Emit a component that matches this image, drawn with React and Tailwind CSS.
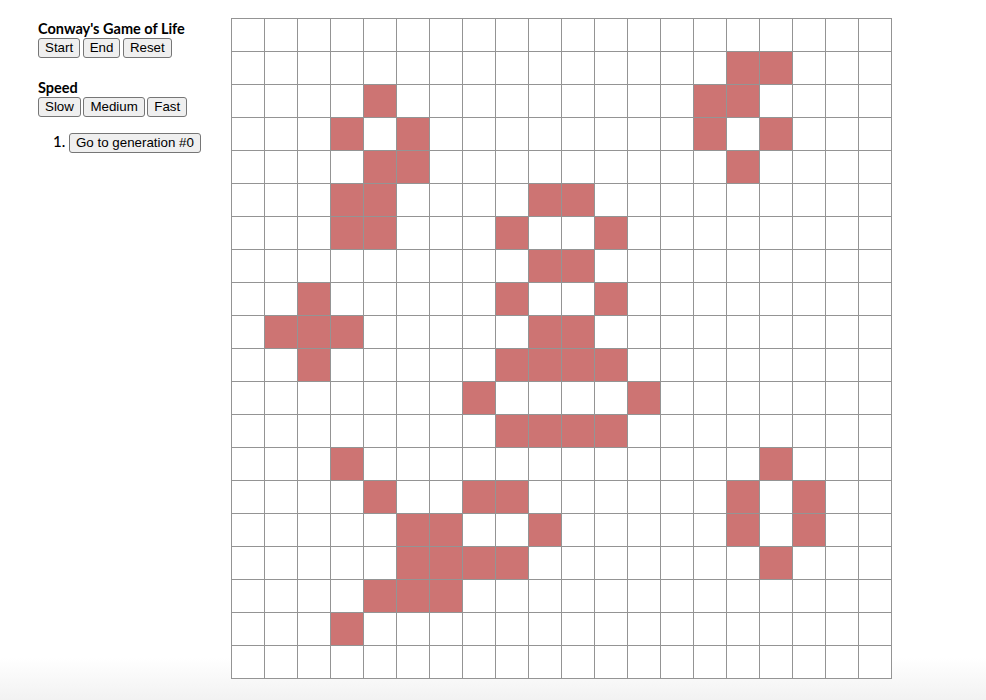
import React from "react";

const ROWS = 20;
const COLS = 20;

// live cells as "row-col"
const liveCells = new Set([
    "1-15", "1-16",
    "2-4", "2-14", "2-15",
    "3-3", "3-5", "3-14", "3-16",
    "4-4", "4-5", "4-15",
    "5-3", "5-4", "5-9", "5-10",
    "6-3", "6-4", "6-8", "6-11",
    "7-9", "7-10",
    "8-2", "8-8", "8-11",
    "9-1", "9-2", "9-3", "9-9", "9-10",
    "10-2", "10-8", "10-9", "10-10", "10-11",
    "11-7", "11-12",
    "12-8", "12-9", "12-10", "12-11",
    "13-3", "13-16",
    "14-4", "14-7", "14-8", "14-15", "14-17",
    "15-5", "15-6", "15-9", "15-15", "15-17",
    "16-5", "16-6", "16-7", "16-8", "16-16",
    "17-4", "17-5", "17-6",
    "18-3",
]);

const Button = ({ children }) => (
    <button className="bg-[#efefef] border border-[#767676] rounded-[3px] px-[6px] py-[1px] text-[13.33px] leading-[16px] font-normal text-black font-['Liberation_Sans',Arial,sans-serif]">
        {children}
    </button>
);

const Board = () => {
    const cells = [];
    for (let r = 0; r < ROWS; r++) {
        for (let c = 0; c < COLS; c++) {
            const alive = liveCells.has(`${r}-${c}`);
            cells.push(
                <div
                    key={`${r}-${c}`}
                    className={`w-[33px] h-[33px] border-r border-b border-[#949494] ${
                        alive ? "bg-[#cd7473]" : "bg-white"
                    }`}
                />
            );
        }
    }
    return (
        <div className="grid grid-cols-[repeat(20,33px)] border-l border-t border-[#949494] self-start">
            {cells}
        </div>
    );
};

export default function App() {
    return (
        <div className="min-h-[700px] bg-linear-to-b from-white from-[94%] to-[#f2f2f2] font-['Lato','Noto_Sans',sans-serif] text-black">
            <div className="flex pt-[18px]">
                <div className="w-[231px] shrink-0 pl-[38px] pt-[1px]">
                    <h3 className="text-[14.5px] font-bold leading-[19px]">
                        Conway's Game of Life
                    </h3>
                    <div className="flex gap-[2.5px]">
                        <Button>Start</Button>
                        <Button>End</Button>
                        <Button>Reset</Button>
                    </div>
                    <h3 className="mt-[20px] text-[14.5px] font-bold leading-[19px]">
                        Speed
                    </h3>
                    <div className="flex gap-[2.5px]">
                        <Button>Slow</Button>
                        <Button>Medium</Button>
                        <Button>Fast</Button>
                    </div>
                    <ol className="list-decimal pl-[31px] mt-[13px] text-[15px] font-medium">
                        <li>
                            <Button>Go to generation #0</Button>
                        </li>
                    </ol>
                </div>
                <Board />
            </div>
        </div>
    );
}
